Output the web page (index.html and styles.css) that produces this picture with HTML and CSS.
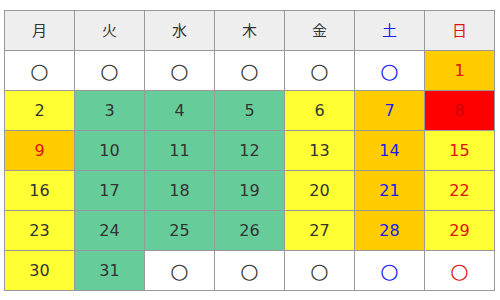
FILE: index.html
```html
<!DOCTYPE html>
<html lang="ja">
<head>
<meta charset="utf-8">
<link rel="stylesheet" href="styles.css">
</head>
<body>
<table class="cal">
  <tr class="head">
    <th>月</th><th>火</th><th>水</th><th>木</th><th>金</th><th class="sat">土</th><th class="sun">日</th>
  </tr>
  <tr>
    <td class="m">○</td><td class="m">○</td><td class="m">○</td><td class="m">○</td><td class="m">○</td><td class="m sat">○</td><td class="o sun">1</td>
  </tr>
  <tr>
    <td class="y">2</td><td class="g">3</td><td class="g">4</td><td class="g">5</td><td class="y">6</td><td class="o sat">7</td><td class="r hol">8</td>
  </tr>
  <tr>
    <td class="o sun">9</td><td class="g">10</td><td class="g">11</td><td class="g">12</td><td class="y">13</td><td class="o sat">14</td><td class="y sun">15</td>
  </tr>
  <tr>
    <td class="y">16</td><td class="g">17</td><td class="g">18</td><td class="g">19</td><td class="y">20</td><td class="o sat">21</td><td class="y sun">22</td>
  </tr>
  <tr>
    <td class="y">23</td><td class="g">24</td><td class="g">25</td><td class="g">26</td><td class="y">27</td><td class="o sat">28</td><td class="y sun">29</td>
  </tr>
  <tr>
    <td class="y">30</td><td class="g">31</td><td class="m">○</td><td class="m">○</td><td class="m">○</td><td class="m sat">○</td><td class="m sun">○</td>
  </tr>
</table>
</body>
</html>
```
FILE: styles.css
```css
html, body {
  margin: 0;
  padding: 0;
  background: #ffffff;
}
body {
  padding: 10px 0 0 4px;
  font-family: "DejaVu Sans", "Noto Sans CJK JP", sans-serif;
}
.cal {
  border-collapse: collapse;
  table-layout: fixed;
  width: 491px;
}
.cal th, .cal td {
  border: 1px solid #999999;
  width: 69px;
  height: 39px;
  padding: 0;
  text-align: center;
  vertical-align: middle;
  font-size: 16px;
  line-height: 20px;
  font-weight: normal;
  color: #333333;
  background: #ffffff;
}
.cal .head th {
  background: #eeeeee;
  font-size: 15px;
}
.cal .m {
  font-size: 21px;
}
.cal .y { background: #ffff33; }
.cal .g { background: #66cc99; }
.cal .o { background: #ffcc00; }
.cal .r { background: #ff0000; }
.cal .sat { color: #1a1aee; }
.cal .sun { color: #e01010; }
.cal .hol { color: #cc0000; }
```
